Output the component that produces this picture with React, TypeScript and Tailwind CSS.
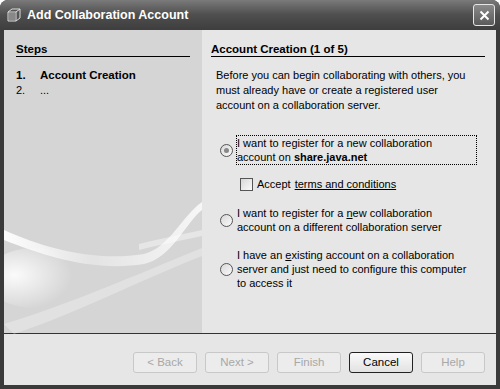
import React from 'react';

const font = { fontFamily: '"Liberation Sans", Arial, sans-serif' };

const Radio: React.FC<{ checked?: boolean }> = ({ checked }) => (
  <span className="flex h-[13px] w-[13px] shrink-0 items-center justify-center rounded-full border border-[#555] bg-gradient-to-br from-[#d8d8d8] to-[#fafafa]">
    {checked && <span className="h-[5px] w-[5px] rounded-full bg-[#888]" />}
  </span>
);

const Btn: React.FC<{ label: string; primary?: boolean }> = ({ label, primary }) => (
  <div
    className={
      primary
        ? 'flex h-[21px] w-[64px] items-center justify-center rounded-[3px] border border-[#222] bg-gradient-to-b from-[#fafafa] to-[#e2e2e2] text-[11.5px] text-black'
        : 'flex h-[21px] w-[64px] items-center justify-center rounded-[3px] border border-[#c8c8c8] bg-[#ececec] text-[11.5px] text-[#a8a8a8]'
    }
  >
    {label}
  </div>
);

// decorative background of the steps panel
const Swoosh = () => (
  <svg className="absolute inset-0" width="198" height="304" viewBox="0 0 198 304">
    <defs>
      <linearGradient id="s1" x1="0" y1="0" x2="1" y2="0">
        <stop offset="0" stopColor="#fff" stopOpacity="0.95" />
        <stop offset="0.45" stopColor="#fff" stopOpacity="0.35" />
        <stop offset="1" stopColor="#fff" stopOpacity="0.8" />
      </linearGradient>
      <radialGradient id="s2" cx="0.3" cy="0.45" r="0.6">
        <stop offset="0" stopColor="#fff" stopOpacity="0.9" />
        <stop offset="1" stopColor="#fff" stopOpacity="0" />
      </radialGradient>
    </defs>
    <path d="M0 200 C40 218 90 232 140 224 C165 218 178 186 198 172 L198 180 C182 192 168 228 140 234 C90 242 40 226 0 210 Z" fill="url(#s1)" />
    <ellipse cx="30" cy="248" rx="48" ry="30" fill="url(#s2)" />
    <path d="M135 214 C160 208 180 204 198 200 L198 206 C180 210 160 214 135 220 Z" fill="#fff" opacity="0.4" />
    <path d="M0 294 C60 276 130 246 198 218 L198 226 C130 253 70 284 10 304 Z" fill="#fff" opacity="0.3" />
  </svg>
);

export default function App() {
  return (
    <div className="h-[389px] w-[500px] bg-white" style={font}>
      <div className="flex h-full flex-col overflow-hidden rounded-t-[8px] bg-[#3a3a3a]">
        <div className="flex h-[30px] items-center bg-gradient-to-b from-[#7a7a7a] via-[#4e4e4e] to-[#3e3e3e] pl-[6px] pr-[5px]">
          <svg width="16" height="16" viewBox="0 0 16 16">
            <path d="M2 5 L6 2 L14 2 L14 11 L10 14 L2 14 Z" fill="#555" stroke="#ddd" strokeWidth="1" />
            <path d="M2 5 L10 5 L14 2 M10 5 L10 14" stroke="#ddd" strokeWidth="1" fill="none" />
            <path d="M3 6 L9 6 L9 13 L3 13 Z" fill="#888" />
          </svg>
          <span className="ml-[5px] text-[12.5px] font-bold text-white">Add Collaboration Account</span>
          <div className="ml-auto flex h-[22px] w-[22px] items-center justify-center rounded-[3px] border border-[#e6e6e6] bg-gradient-to-b from-[#8a8a8a] to-[#5a5a5a]">
            <svg width="11" height="11" viewBox="0 0 11 11">
              <path d="M1.5 1.5 L9.5 9.5 M9.5 1.5 L1.5 9.5" stroke="#fff" strokeWidth="2" />
            </svg>
          </div>
        </div>
        <div className="mx-[4px] mb-[4px] flex flex-1 flex-col bg-[#e6e6e6]">
          <div className="flex h-[304px] border-b border-[#333]">
            <div className="relative w-[198px] bg-[#d5d5d5] text-black">
              <Swoosh />
              <div className="relative px-[12px] pt-[12px]">
                <div className="border-b border-black text-[11.5px] font-bold leading-[14px]">Steps</div>
                <div className="mt-[11px] flex text-[11.5px] font-bold leading-[15px]">
                  <span className="w-[24px]">1.</span>
                  <span>Account Creation</span>
                </div>
                <div className="flex text-[11px] leading-[15px]">
                  <span className="w-[24px]">2.</span>
                  <span>...</span>
                </div>
              </div>
            </div>
            <div className="flex-1 pl-[9px] pr-[11px] pt-[12px] text-[11px] text-black">
              <div className="border-b border-black text-[11.5px] font-bold leading-[14px]">Account Creation (1 of 5)</div>
              <p className="mt-[11px] whitespace-nowrap pl-[5px] leading-[15px]">
                Before you can begin collaborating with others, you
                <br />
                must already have or create a registered user
                <br />
                account on a collaboration server.
              </p>
              <div className="mt-[22px] flex items-center gap-[3px] pl-[9px]">
                <Radio checked />
                <div className="w-[241px] whitespace-nowrap border border-dotted border-black leading-[14px]">
                  I want to register for a new collaboration
                  <br />
                  account on <span className="font-bold">share.java.net</span>
                </div>
              </div>
              <div className="mt-[12px] flex h-[14px] items-center gap-[4px] pl-7">
                <span className="ml-px h-[13px] w-[13px] shrink-0 border border-[#555] bg-gradient-to-br from-[#d8d8d8] to-[#fafafa]" />
                <span>Accept</span>
                <span className="underline">terms and conditions</span>
              </div>
              <div className="mt-[15px] flex items-center gap-[4px] pl-[9px]">
                <Radio />
                <div className="whitespace-nowrap leading-[14px]">
                  I want to register for a <u>n</u>ew collaboration
                  <br />
                  account on a different collaboration server
                </div>
              </div>
              <div className="mt-[14px] flex items-center gap-[4px] pl-[9px]">
                <Radio />
                <div className="whitespace-nowrap leading-[14px]">
                  I have an <u>e</u>xisting account on a collaboration
                  <br />
                  server and just need to configure this computer
                  <br />
                  to access it
                </div>
              </div>
            </div>
          </div>
          <div className="flex flex-1 items-start justify-end gap-[8px] pr-[11px] pt-[18px]">
            <Btn label="< Back" />
            <Btn label="Next >" />
            <Btn label="Finish" />
            <Btn label="Cancel" primary />
            <Btn label="Help" />
          </div>
        </div>
      </div>
    </div>
  );
}
